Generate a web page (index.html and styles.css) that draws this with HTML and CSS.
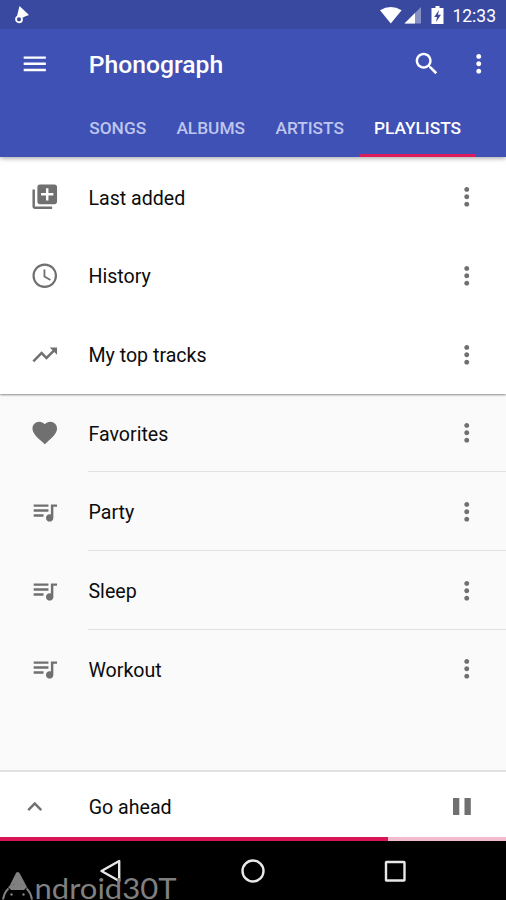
FILE: index.html
```html
<!DOCTYPE html>
<html lang="en">
<head>
<meta charset="utf-8">
<title>Phonograph</title>
<link rel="stylesheet" href="styles.css">
</head>
<body>
<svg class="defs" width="0" height="0">
  <symbol id="more" viewBox="0 0 24 24"><path d="M12 8c1.100 0 2-.9 2-2s-.9-2-2-2-2 .9-2 2 .9 2 2 2zm0 2c-1.100 0-2 .9-2 2s.9 2 2 2 2-.9 2-2-.9-2-2-2zm0 6c-1.100 0-2 .9-2 2s.9 2 2 2 2-.9 2-2-.9-2-2-2z"/></symbol>
  <symbol id="queue" viewBox="0 0 24 24"><path d="M15 6H3v2h12V6zm0 4H3v2h12v-2zM3 16h8v-2H3v2zM17 6v8.180c-.31-.11-.65-.18-1-.18-1.660 0-3 1.340-3 3s1.340 3 3 3 3-1.340 3-3V8h3V6h-5z"/></symbol>
</svg>
<div class="screen">
  <header class="header">
    <div class="status">
      <svg class="notification" viewBox="0 0 16 18"><path d="M5.500 0L15 9Q11 10 9 11.500L3 10Z"/><circle cx="5" cy="13.300" r="3" fill="#3949a0" stroke="#fff" stroke-width="1.800"/></svg>
      <svg class="system" viewBox="0 0 66 20">
        <path d="M0 4.300Q10.800-2.500 21.600 4.300L10.800 17.500Z"/>
        <path d="M41 1v16.500H24.500z" opacity=".4"/><path d="M35 7v10.500H24.500z"/>
        <path d="M55.500 0h4v2h4v16h-12V2h4zM59 4L54.200 11h2.800l-1 5 5-7.200h-3z" fill-rule="evenodd"/>
      </svg>
      <span class="clock">12:33</span>
    </div>
    <div class="toolbar">
      <svg class="icon" viewBox="0 0 24 24"><path d="M3 18h18v-2H3v2zm0-5h18v-2H3v2zm0-7v2h18V6H3z"/></svg>
      <h1>Phonograph</h1>
      <svg class="icon search" viewBox="0 0 24 24"><path d="M15.500 14h-.79l-.28-.27C15.410 12.590 16 11.110 16 9.500 16 5.910 13.090 3 9.500 3S3 5.910 3 9.500 5.910 16 9.500 16c1.610 0 3.090-.59 4.230-1.570l.27.28v.79l5 4.990L20.490 19l-4.990-5zm-6 0C7.010 14 5 11.990 5 9.500S7.010 5 9.500 5 14 7.010 14 9.500 11.990 14 9.500 14z"/></svg>
      <svg class="icon"><use href="#more"/></svg>
    </div>
    <nav class="tabs"><a>SONGS</a><a>ALBUMS</a><a>ARTISTS</a><a class="active">PLAYLISTS</a></nav>
  </header>
  <main>
    <section class="smart">
      <div class="row"><svg class="icon" viewBox="0 0 24 24"><path d="M4 6H2v14c0 1.100.9 2 2 2h14v-2H4V6zm16-4H8c-1.100 0-2 .9-2 2v12c0 1.100.9 2 2 2h12c1.100 0 2-.9 2-2V4c0-1.100-.9-2-2-2zm-1 9h-4v4h-2v-4H9V9h4V5h2v4h4v2z"/></svg><div class="label">Last added</div><svg class="icon menu"><use href="#more"/></svg></div>
      <div class="row"><svg class="icon" viewBox="0 0 24 24"><path d="M11.990 2C6.470 2 2 6.480 2 12s4.470 10 9.990 10C17.520 22 22 17.520 22 12S17.520 2 11.990 2zM12 20.200a8.200 8.200 0 1 1 0-16.400 8.200 8.200 0 0 1 0 16.400zM12.500 7H11v6l5.250 3.150.75-1.230-4.500-2.670z"/></svg><div class="label">History</div><svg class="icon menu"><use href="#more"/></svg></div>
      <div class="row"><svg class="icon" viewBox="0 0 24 24"><path d="M16 6l2.290 2.290-4.880 4.880-4-4L2 16.590 3.410 18l6-6 4 4 6.300-6.290L22 12V6z"/></svg><div class="label">My top tracks</div><svg class="icon menu"><use href="#more"/></svg></div>
    </section>
    <section class="playlists">
      <div class="row"><svg class="icon" viewBox="0 0 24 24"><path d="M12 21.350l-1.450-1.320C5.400 15.360 2 12.280 2 8.500 2 5.420 4.420 3 7.500 3c1.740 0 3.410.81 4.500 2.090C13.090 3.810 14.760 3 16.500 3 19.580 3 22 5.420 22 8.500c0 3.780-3.400 6.860-8.550 11.540L12 21.350z"/></svg><div class="label">Favorites</div><svg class="icon menu"><use href="#more"/></svg></div>
      <div class="row"><svg class="icon"><use href="#queue"/></svg><div class="label">Party</div><svg class="icon menu"><use href="#more"/></svg></div>
      <div class="row"><svg class="icon"><use href="#queue"/></svg><div class="label">Sleep</div><svg class="icon menu"><use href="#more"/></svg></div>
      <div class="row"><svg class="icon"><use href="#queue"/></svg><div class="label">Workout</div><svg class="icon menu"><use href="#more"/></svg></div>
    </section>
  </main>
  <footer class="player">
    <svg class="icon" viewBox="0 0 24 24"><path d="M12 8l-6 6 1.410 1.410L12 10.830l4.590 4.580L18 14z"/></svg>
    <div class="song">Go ahead</div>
    <svg class="pause" viewBox="0 0 18 17"><path d="M0 0h6.300v17H0zM11.500 0h6.300v17h-6.300z"/></svg>
  </footer>
  <div class="progress"><div class="elapsed"></div></div>
  <div class="navbar">
    <svg viewBox="0 0 24 24"><path d="M20.200 2v20L2.500 12z"/></svg>
    <svg viewBox="0 0 24 24"><circle cx="12" cy="12" r="10.500"/></svg>
    <svg viewBox="0 0 24 24"><rect x="3" y="3" width="18.500" height="18.500" rx=".6"/></svg>
  </div>
  <svg class="watermark" viewBox="0 0 180 34">
    <path d="M10 19L16 7Q17.500 5 19.500 7L27.500 22Q22 18 17.500 18Q12 18 8 22Z" fill="#808080"/>
    <path d="M8 21Q17.500 14 27 21L24 24H11Z" fill="#808080"/>
    <path d="M3 33.500Q4.500 26 8.500 22.500M32 33.500Q30.500 26 26.500 22.500" fill="none" stroke="#808080" stroke-width="2"/>
    <circle cx="11.500" cy="28.500" r="1.200" fill="#808080"/><circle cx="23.500" cy="28.500" r="1.200" fill="#808080"/>
    <text x="34.500" y="32.500" textLength="142" lengthAdjust="spacingAndGlyphs">ndroid30T</text>
  </svg>
</div>
</body>
</html>
```
FILE: styles.css
```css
* { box-sizing: border-box; }
body { margin: 0; font-family: Roboto, "Liberation Sans", sans-serif; color: #0c0c0c; }
svg { display: block; flex: none; fill: currentColor; }
.defs { position: absolute; }
.screen { position: relative; width: 506px; height: 900px; display: flex; flex-direction: column; overflow: hidden; background: #fafafa; }
.icon { width: 29.5px; height: 29.5px; }

.header { height: 157px; flex: none; background: #3f51b5; color: #fff; box-shadow: 0 1px 5px rgba(0,0,0,.4); z-index: 1; }
.status { height: 29px; background: #3949a0; display: flex; align-items: center; padding: 0 10px 0 14px; }
.notification { width: 16px; height: 18px; margin-top: 1px; }
.system { width: 66px; height: 20px; margin: 3px 5px 0 auto; }
.clock { width: 45px; font-size: 17.5px; text-align: right; white-space: nowrap; padding-top: 2px; }
.toolbar { height: 70px; display: flex; align-items: center; padding: 0 12.500px 0 19.700px; }
.toolbar h1 { margin: 2px auto 0 39.500px; font-size: 24.700px; line-height: 30px; font-weight: 500; }
.search { margin-right: 22.500px; }
.tabs { height: 58px; display: grid; grid-template-columns: 87px 99px 99px 116.500px; padding-left: 74.200px; font-size: 17.300px; font-weight: 500; }
.tabs a { display: flex; align-items: center; justify-content: center; padding-top: 3px; color: #bec5ee; border-bottom: 3px solid transparent; white-space: nowrap; }
.tabs .active { color: #fff; border-bottom-color: #dc1b5b; }

main { flex: 1; min-height: 0; }
.smart { background: #fff; height: 236.600px; padding-top: .6px; box-shadow: 0 1px 2px rgba(0,0,0,.45); }
.row { height: 78.700px; display: flex; align-items: center; padding-left: 29.700px; color: #707070; }
.label { flex: 1; align-self: stretch; display: flex; align-items: center; margin-left: 29.300px; padding-top: 2.400px; font-size: 19.600px; color: #0c0c0c; }
.row .menu { margin-right: 24.700px; }
.playlists .row { background: linear-gradient(#e2e2e2, #e2e2e2) 88px 100% / 418px 1px no-repeat; }
.playlists .row:last-child { background: none; }

.player { height: 67px; flex: none; display: flex; align-items: center; padding: 0 35.500px 0 19.700px; background: #fff; border-top: 2px solid #e2e2e2; color: #707070; }
.player .icon { margin-top: 4px; }
.song { flex: 1; margin: 5px 0 0 39.500px; font-size: 19.600px; color: #0c0c0c; }
.pause { width: 18px; height: 17px; margin-top: 4px; }
.progress { height: 4px; flex: none; background: #f3bbcf; }
.elapsed { width: 388px; height: 100%; background: #d81558; }
.navbar { height: 59px; flex: none; display: flex; justify-content: center; align-items: center; gap: 118px; background: #000; }
.navbar svg { width: 24px; height: 24px; fill: none; stroke: #e8e8e8; stroke-width: 2.400; stroke-linejoin: round; }
.watermark { position: absolute; left: 0; bottom: 0; width: 180px; height: 34px; }
.watermark text { font-family: Lato, sans-serif; font-weight: 400; font-size: 29px; fill: #808080; }
```
